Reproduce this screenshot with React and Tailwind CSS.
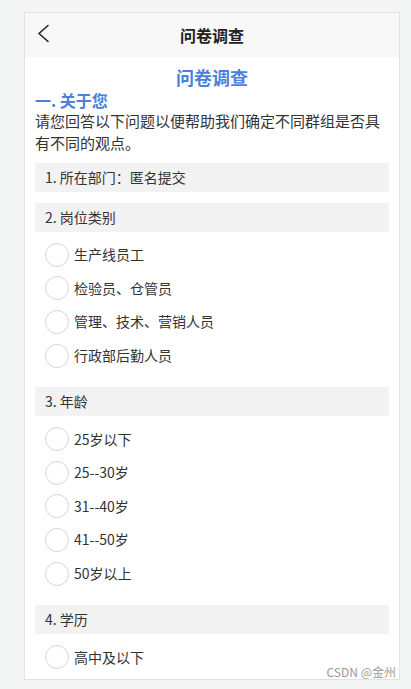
import React from "react";

const questions = [
  { title: "1. 所在部门：匿名提交", options: [] },
  {
    title: "2. 岗位类别",
    options: ["生产线员工", "检验员、仓管员", "管理、技术、营销人员", "行政部后勤人员"],
  },
  {
    title: "3. 年龄",
    options: ["25岁以下", "25--30岁", "31--40岁", "41--50岁", "50岁以上"],
  },
  { title: "4. 学历", options: ["高中及以下"] },
];

const Radio = ({ label }) => (
  <label className="flex items-center h-[33.6px] pl-[10px] cursor-pointer">
    <span className="w-[24px] h-[24px] rounded-full border border-[#d6d6d6] bg-white shrink-0" />
    <span className="ml-[5px] text-[14px] text-[#333]">{label}</span>
  </label>
);

const Question = ({ title, options }) => (
  <div className={options.length ? "mb-[15px]" : "mb-[11px]"}>
    <div className="h-[29px] bg-[#f2f2f2] flex items-center pl-[10px] text-[14px] text-[#333]">
      {title}
    </div>
    {options.length > 0 && (
      <div className="pt-[6px]">
        {options.map((o) => (
          <Radio key={o} label={o} />
        ))}
      </div>
    )}
  </div>
);

export default function App() {
  return (
    <div
      className="relative w-[411px] h-[689px] bg-[#f4f5f5] pt-[12px] pl-[24px] overflow-hidden"
      style={{ fontFamily: '"Noto Sans CJK SC", "Noto Sans", sans-serif' }}
    >
      <div className="w-[376px] h-[668px] bg-white border border-[#e2e2e2] overflow-hidden flex flex-col">
        <header className="h-[44px] bg-[#f8f8f8] relative flex items-center justify-center shrink-0">
          <button type="button" className="absolute left-[12px] top-[11px]" aria-label="返回">
            <svg width="14" height="20" viewBox="0 0 14 20" fill="none">
              <path d="M11 1.5 L2 9.5 L11 17.5" stroke="#222" strokeWidth="1.6" strokeLinecap="round" strokeLinejoin="round" />
            </svg>
          </button>
          <h1 className="text-[16px] font-bold text-[#222]">问卷调查</h1>
        </header>

        <main className="px-[10px] pt-[7px]">
          <h2 className="text-center text-[18px] font-bold text-[#4a80de] leading-[26px]">问卷调查</h2>
          <h3 className="text-[16px] font-bold text-[#4a80de] leading-[20px]">一. 关于您</h3>
          <p className="text-[15px] text-[#333] leading-[22px] mb-[9px]">
            请您回答以下问题以便帮助我们确定不同群组是否具有不同的观点。
          </p>
          {questions.map((q) => (
            <Question key={q.title} {...q} />
          ))}
        </main>
      </div>
      <div className="absolute right-[15px] bottom-[8px] text-[12px] text-[#9a9a9a]">CSDN @金州</div>
    </div>
  );
}
